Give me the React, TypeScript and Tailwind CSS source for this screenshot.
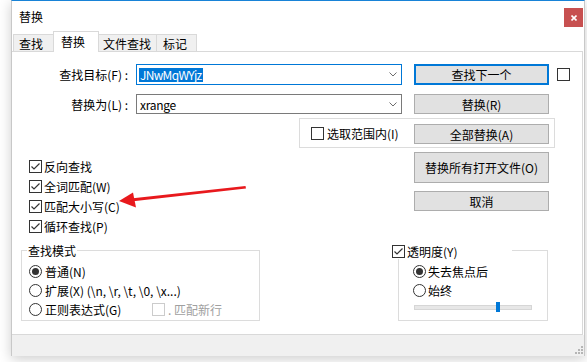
import React from "react"

const font = { fontFamily: '"Noto Sans CJK SC", "Noto Sans", sans-serif' }

function CheckBox({ checked = false, disabled = false }: { checked?: boolean; disabled?: boolean }) {
  return (
    <div
      className={`w-[13px] h-[13px] shrink-0 border bg-white flex items-center justify-center ${
        disabled ? "border-[#cccccc]" : "border-[#333333]"
      }`}
    >
      {checked && (
        <svg width="11" height="11" viewBox="0 0 11 11">
          <path d="M1.5 5.5 L4 8 L9.5 2.5" fill="none" stroke="#333333" strokeWidth="1.2" />
        </svg>
      )}
    </div>
  )
}

function Radio({ checked = false }: { checked?: boolean }) {
  return (
    <div className="w-[13px] h-[13px] shrink-0 rounded-full border border-[#333333] bg-white flex items-center justify-center">
      {checked && <div className="w-[7px] h-[7px] rounded-full bg-[#333333]" />}
    </div>
  )
}

function Button({ label, h = "h-[20px]", focus = false }: { label: string; h?: string; focus?: boolean }) {
  return (
    <div
      className={`w-[135px] ${h} shrink-0 bg-[#e1e1e1] flex items-center justify-center text-[12px] leading-[15px] text-black ${
        focus ? "border-2 border-[#0078d7]" : "border border-[#adadad]"
      }`}
    >
      {label}
    </div>
  )
}

function Chevron() {
  return (
    <svg width="8" height="5" viewBox="0 0 8 5">
      <path d="M0.5 0.5 L4 4 L7.5 0.5" fill="none" stroke="#6d6d6d" strokeWidth="1" />
    </svg>
  )
}

function CheckRow({ label }: { label: string }) {
  return (
    <div className="h-[20px] flex items-center">
      <CheckBox checked />
      <span className="ml-[2px] text-[12px] leading-[15px]">{label}</span>
    </div>
  )
}

export default function App() {
  return (
    <div className="w-[587px] h-[362px] bg-white relative overflow-hidden text-black" style={font}>
      {/* dialog window */}
      <div className="ml-[11px] w-[574px] h-[356px] flex flex-col bg-white border-t border-t-[#1883d7] border-x border-x-[#c8c8c8] shadow-[0_3px_12px_rgba(0,0,0,0.2)]">
        {/* title bar */}
        <div className="h-[30px] flex justify-between items-start">
          <span className="pl-[7px] pt-[8px] text-[12px] leading-[15px]">替换</span>
          <div className="mt-[7px] mr-[1px] w-[19px] h-[19px] bg-[#c75050] flex items-center justify-center">
            <svg width="6" height="6" viewBox="0 0 6 6">
              <path d="M0.5 0.5 L5.5 5.5 M5.5 0.5 L0.5 5.5" stroke="white" strokeWidth="1.6" />
            </svg>
          </div>
        </div>

        {/* tabs */}
        <div className="h-[20px] flex items-end pl-[1px] text-[12px] leading-[15px]">
          <div className="w-[40px] h-[17px] border-t border-l border-[#d9d9d9] bg-[#f0f0f0] pl-[5px] pt-[1px]">查找</div>
          <div className="relative z-10 w-[46px] h-[21px] -mb-px border-t border-x border-[#d9d9d9] bg-white pl-[7px] pt-[2px]">
            替换
          </div>
          <div className="w-[58px] h-[17px] border-t border-r border-[#d9d9d9] bg-[#f0f0f0] pl-[4px] pt-[1px]">文件查找</div>
          <div className="w-[40px] h-[17px] border-t border-r border-[#d9d9d9] bg-[#f0f0f0] pl-[6px] pt-[1px]">标记</div>
        </div>

        {/* tab panel */}
        <div className="w-[571px] h-[284px] border-t border-r border-b border-[#d9d9d9] bg-white text-[12px] leading-[15px]">
          {/* find what */}
          <div className="mt-[12px] h-[21px] flex items-center">
            <span className="w-[118px] pr-[2px] text-right">查找目标(F) :</span>
            <div className="ml-[6px] w-[266px] h-[21px] border border-[#0078d7] flex items-center justify-between pl-[2px] pr-[4px]">
              <span className="bg-[#0078d7] text-white px-[1px] leading-[14px] tracking-[-0.7px]">JNwMqWYjz</span>
              <Chevron />
            </div>
            <div className="ml-[12px]">
              <Button label="查找下一个" h="h-[21px]" focus />
            </div>
            <div className="ml-[8px]">
              <CheckBox />
            </div>
          </div>

          {/* replace with */}
          <div className="mt-[9px] h-[20px] flex items-center">
            <span className="w-[118px] pr-[2px] text-right">替换为(L) :</span>
            <div className="ml-[6px] w-[266px] h-[20px] border border-[#7a7a7a] flex items-center justify-between pl-[3px] pr-[4px]">
              <span className="tracking-[-0.3px]">xrange</span>
              <Chevron />
            </div>
            <div className="ml-[12px]">
              <Button label="替换(R)" />
            </div>
          </div>

          {/* in selection group */}
          <div className="mt-[4px] ml-[287px] w-[256px] h-[30px] border border-[#dcdcdc] flex">
            <div className="w-[114px] flex items-center pl-[11px]">
              <CheckBox />
              <span className="ml-[3px]">选取范围内(I)</span>
            </div>
            <div className="mt-[5px]">
              <Button label="全部替换(A)" />
            </div>
          </div>

          {/* options + buttons */}
          <div className="h-[102px] flex">
            <div className="w-[402px] pl-[17px] pt-[8px] flex flex-col">
              <CheckRow label="反向查找" />
              <CheckRow label="全词匹配(W)" />
              <CheckRow label="匹配大小写(C)" />
              <CheckRow label="循环查找(P)" />
            </div>
            <div className="pt-[4px] flex flex-col gap-[8px]">
              <Button label="替换所有打开文件(O)" h="h-[31px]" />
              <Button label="取消" />
            </div>
          </div>

          {/* group boxes */}
          <div className="h-[71px] flex">
            <div className="relative ml-[9px] w-[239px] h-[71px] border border-[#dcdcdc] pl-[7px] pt-[11px]">
              <span className="absolute -top-[8px] left-[5px] bg-white px-[1px]">查找模式</span>
              <div className="h-[19px] flex items-center">
                <Radio checked />
                <span className="ml-[3px]">普通(N)</span>
              </div>
              <div className="h-[19px] flex items-center">
                <Radio />
                <span className="ml-[3px]">扩展(X) (\n, \r, \t, \0, \x...)</span>
              </div>
              <div className="h-[19px] flex items-center">
                <Radio />
                <span className="ml-[3px] w-[107px]">正则表达式(G)</span>
                <CheckBox disabled />
                <span className="ml-[3px] text-[#a0a0a0]">. 匹配新行</span>
              </div>
            </div>

            <div className="relative ml-[138px] w-[150px] h-[71px] border border-[#dcdcdc] pl-[14px] pt-[11px]">
              <div className="absolute -top-[7px] -left-[7px] w-[120px] h-[15px] bg-white flex items-center">
                <CheckBox checked />
                <span className="ml-[2px]">透明度(Y)</span>
              </div>
              <div className="h-[19px] flex items-center">
                <Radio checked />
                <span className="ml-[2px]">失去焦点后</span>
              </div>
              <div className="h-[19px] flex items-center">
                <Radio />
                <span className="ml-[2px]">始终</span>
              </div>
              <div className="h-[19px] pl-[1px] pt-[5px]">
                <div className="relative w-[118px] h-[5px] bg-[#e7e7e7] border border-[#d6d6d6]">
                  <div className="absolute -top-[4px] left-[81px] w-[4px] h-[10px] bg-[#0078d7]" />
                </div>
              </div>
            </div>
          </div>
        </div>

        {/* bottom strip */}
        <div className="h-[21px] bg-[#f0f0f0] flex justify-end items-end pr-[1px] pb-[2px]">
          <svg width="9" height="9" viewBox="0 0 9 9">
            <rect x="7" y="1" width="2" height="2" fill="#b5b5b5" />
            <rect x="4" y="4" width="2" height="2" fill="#b5b5b5" />
            <rect x="7" y="4" width="2" height="2" fill="#b5b5b5" />
            <rect x="1" y="7" width="2" height="2" fill="#b5b5b5" />
            <rect x="4" y="7" width="2" height="2" fill="#b5b5b5" />
            <rect x="7" y="7" width="2" height="2" fill="#b5b5b5" />
          </svg>
        </div>
      </div>

      {/* red annotation arrow */}
      <svg className="absolute left-0 top-0 pointer-events-none" width="587" height="362" viewBox="0 0 587 362">
        <path d="M245.5 186 L246 188.6 L131 201.5 L130.6 198.5 Z" fill="#e8191d" />
        <path d="M119 201 L133 192.5 L136 207.5 Z" fill="#e8191d" />
      </svg>
    </div>
  )
}
